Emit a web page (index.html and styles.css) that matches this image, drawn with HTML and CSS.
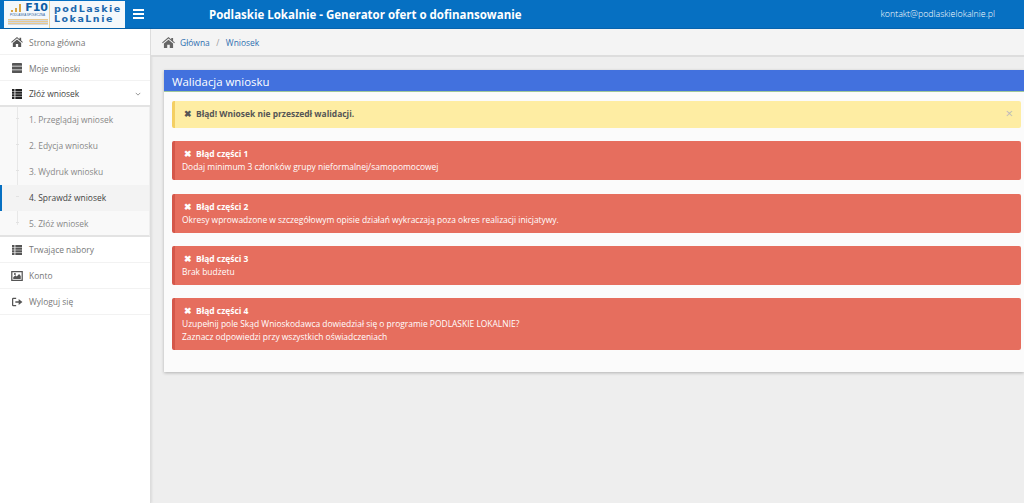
FILE: index.html
```html
<!DOCTYPE html>
<html lang="pl">
<head>
<meta charset="utf-8">
<title>Podlaskie Lokalnie</title>
<link rel="stylesheet" href="styles.css">
</head>
<body>
<header class="topbar">
  <div class="logo">
    <div class="logo-left">
      <div class="logo-fio">
        <svg class="logo-bars" width="14" height="9" viewBox="0 0 14 9"><path d="M1 9V7h2v2zM5 9V5h2v4zM9 9V1h2v8z" fill="#d9a441"/></svg>
        <span>F10</span>
      </div>
      <div class="logo-small">PODLASKA SPOŁECZNA</div>
      <div class="logo-stripe"></div>
    </div>
    <div class="logo-right"><span>podLaskie</span><span>LokaLnie</span></div>
  </div>
  <div class="burger"><i></i><i></i><i></i></div>
  <div class="title">Podlaskie Lokalnie - Generator ofert o dofinansowanie</div>
  <div class="contact">kontakt@podlaskielokalnie.pl</div>
</header>
<div class="shell">
  <aside class="sidebar">
    <a class="item item-top"><svg class="ico" viewBox="0 0 14 12"><path d="M7 0 0 6l.7.8L7 1.6l6.3 5.2.7-.8-2-1.7V1h-2v1.8zM2 7.200V12h3.600V8.400h2.800V12H12V7.200L7 3z"/></svg>Strona główna</a>
    <a class="item item-top"><svg class="ico" viewBox="0 0 14 12"><path fill-rule="evenodd" d="M2 0h10a1 1 0 0 1 1 1v2.300H1V1a1 1 0 0 1 1-1zM1 4.300h12v3.400H1zM1 8.700h12V11a1 1 0 0 1-1 1H2a1 1 0 0 1-1-1z"/></svg>Moje wnioski</a>
    <a class="item item-top item-open"><svg class="ico ico-dark" viewBox="0 0 14 12"><path d="M1 0h3v2.600H1zM5 0h8v2.600H5zM1 3.200h3v2.600H1zM5 3.200h8v2.600H5zM1 6.400h3V9H1zM5 6.400h8V9H5zM1 9.500h3V12H1zM5 9.500h8V12H5z"/></svg>Złóż wniosek<svg class="chev" viewBox="0 0 8 5"><path d="M1 1l3 3 3-3" fill="none" stroke="#777" stroke-width="1"/></svg></a>
    <div class="sub">
      <a class="sub-item">1. Przeglądaj wniosek</a>
      <a class="sub-item">2. Edycja wniosku</a>
      <a class="sub-item">3. Wydruk wniosku</a>
      <a class="sub-item sub-active">4. Sprawdź wniosek</a>
      <a class="sub-item">5. Złóż wniosek</a>
    </div>
    <a class="item"><svg class="ico" viewBox="0 0 14 12"><path d="M1 0h3v2.600H1zM5 0h8v2.600H5zM1 3.200h3v2.600H1zM5 3.200h8v2.600H5zM1 6.400h3V9H1zM5 6.400h8V9H5zM1 9.500h3V12H1zM5 9.500h8V12H5z"/></svg>Trwające nabory</a>
    <a class="item"><svg class="ico" viewBox="0 0 14 12"><path fill-rule="evenodd" d="M0 0h14v12H0zM1.500 1.500v9h11v-9zM2.500 9.500V7.500l2.500-2.500 1.700 1.700L9.500 3.500l2 2.500v3.500zM4.500 2.500a1.200 1.200 0 1 1 0 2.400 1.200 1.200 0 0 1 0-2.400z"/></svg>Konto</a>
    <a class="item"><svg class="ico" viewBox="0 0 14 12"><path d="M6 1H2.500A1.500 1.500 0 0 0 1 2.500v7A1.500 1.500 0 0 0 2.500 11H6V9.500H2.500v-7H6zM9 2.500V5H5v2h4v2.500L13.500 6z"/></svg>Wyloguj się</a>
  </aside>
  <main class="main">
    <nav class="crumbs">
      <svg class="crumb-home" viewBox="0 0 14 12"><path d="M7 0 0 6l.7.8L7 1.600l6.300 5.200.7-.8-2-1.700V1h-2v1.800zM2 7.200V12h3.600V8.400h2.800V12H12V7.200L7 3z"/></svg>
      <a>Główna</a><span class="sep">/</span><a>Wniosek</a>
    </nav>
    <section class="panel">
      <h1 class="panel-head">Walidacja wniosku</h1>
      <div class="panel-body">
        <div class="alert warn"><b><span class="x">✖</span>Błąd! Wniosek nie przeszedł walidacji.</b><span class="close">×</span></div>
        <div class="alert err"><b><span class="x">✖</span>Błąd części 1</b><p>Dodaj minimum 3 członków grupy nieformalnej/samopomocowej</p></div>
        <div class="alert err"><b><span class="x">✖</span>Błąd części 2</b><p>Okresy wprowadzone w szczegółowym opisie działań wykraczają poza okres realizacji inicjatywy.</p></div>
        <div class="alert err"><b><span class="x">✖</span>Błąd części 3</b><p>Brak budżetu</p></div>
        <div class="alert err"><b><span class="x">✖</span>Błąd części 4</b><p>Uzupełnij pole Skąd Wnioskodawca dowiedział się o programie PODLASKIE LOKALNIE?</p><p>Zaznacz odpowiedzi przy wszystkich oświadczeniach</p></div>
      </div>
    </section>
  </main>
</div>
</body>
</html>
```
FILE: styles.css
```css
* { box-sizing: border-box; }
html, body { margin: 0; height: 100%; overflow: hidden; }
body { font-family: "Open Sans", sans-serif; font-size: 8.45px; background: #eeeeee; color: #555; height: 503px; }
.topbar { height: 29px; background: #0670c2; display: flex; align-items: center; color: #fff; border-bottom: 1px solid #0763ad; }
.logo { width: 121px; height: 27px; margin-left: 4px; display: flex; align-items: stretch; background: #f4f8fb; }
.logo-left { width: 46px; display: flex; flex-direction: column; align-items: flex-end; border-right: 1px solid #e8cf9a; overflow: hidden; padding: 2px 1px 0 3px; }
.logo-fio { display: flex; align-items: flex-end; gap: 1px; font: bold 11px/10px "DejaVu Sans", sans-serif; color: #0d5da6; height: 10px; }
.logo-bars { margin-bottom: 1px; }
.logo-small { font: 3px/5px "Liberation Sans", sans-serif; color: #2a62a0; white-space: nowrap; align-self: center; }
.logo-stripe { width: 40px; height: 6px; margin-top: 1px; background: repeating-linear-gradient(180deg,#e8c88f 0 1px,#cfd9e6 1px 2px); }
.logo-right { display: flex; flex-direction: column; justify-content: center; padding-left: 4px; font: bold 9.5px/10px "DejaVu Sans", sans-serif; letter-spacing: 1.5px; color: #1c68ae; }
.burger { width: 11px; margin-left: 8px; display: flex; flex-direction: column; gap: 2px; }
.burger i { height: 2px; background: #fff; display: block; }
.title { margin-left: 65px; font-size: 11.5px; font-weight: 700; flex: 1; }
.contact { font-size: 8.83px; font-weight: 300; margin-right: 29px; }
.shell { display: flex; height: 474px; }
.sidebar { width: 151px; background: #fff; border-right: 1px solid #ddd; box-shadow: 1px 0 2px rgba(0,0,0,.08); display: flex; flex-direction: column; flex: none; }
.item { height: 26px; display: flex; align-items: center; padding-left: 11px; color: #777; border-bottom: 1px solid #f2f2f2; }
.item-top { padding-top: 1px; }
.item-open { color: #444; border-bottom: 2px solid #e3e3e3; }
.ico { width: 12px; height: 10px; margin-right: 6px; fill: #555; flex: none; }
.ico-dark { fill: #222; }
.chev { width: 6px; height: 4px; margin-left: auto; margin-right: 9px; }
.sub { height: 130px; background: #f9f9f9; border-bottom: 2px solid #e3e3e3; position: relative; border-right: 1px solid #eee; overflow: hidden; }
.sub::before { content: ""; position: absolute; left: 17px; top: 0; bottom: 10px; width: 1px; background: #e8e8e8; }
.sub-item { display: flex; align-items: center; height: 26px; padding-left: 29px; padding-bottom: 2px; color: #888; position: relative; }
.sub-item::before { content: ""; position: absolute; left: 16px; top: 11px; width: 3px; height: 1px; background: #e2e2e2; }
.sub-active { color: #444; background: #f3f3f3; box-shadow: inset 2px 0 0 #0670c2; }
.main { flex: 1; min-width: 0; }
.crumbs { height: 28px; background: #f4f4f4; border-bottom: 2px solid #ddd; display: flex; align-items: center; padding-left: 11px; color: #2f6fb0; font-size: 8.45px; }
.crumb-home { width: 13px; height: 11px; fill: #666; margin-right: 5px; }
.sep { color: #999; margin: 0 6.5px; }
.panel { margin: 13px 0 0 13px; background: #fbfbfb; height: 302px; box-shadow: 0 1px 3px rgba(0,0,0,.25); }
.panel-head { margin: 0; height: 22px; background: #4271de; border-bottom: 1px solid #9fc79a; color: #fff; font-size: 11.4px; font-weight: 400; line-height: 23px; padding-left: 8px; }
.panel-body { padding: 9px 3px 0 8px; height: 280px; }
.alert { border-radius: 2px; border-left: 3px solid; position: relative; line-height: 13px; }
.alert b { display: block; font-weight: 700; }
.alert p { margin: 0; }
.x { margin-right: 4px; font-size: 8.5px; }
.warn { height: 27px; background: #feeda3; border-color: #f4cf62; color: #555; padding: 6px 0 0 9px; margin-bottom: 13.3px; }
.close { position: absolute; right: 8px; top: 6px; color: #bbb; font-size: 13px; }
.err { background: #e66e5e; border-color: #d4574a; color: #fff; padding: 6px 8px 7px 7px; margin-bottom: 13.3px; }
.err b { padding-left: 2px; }
```
